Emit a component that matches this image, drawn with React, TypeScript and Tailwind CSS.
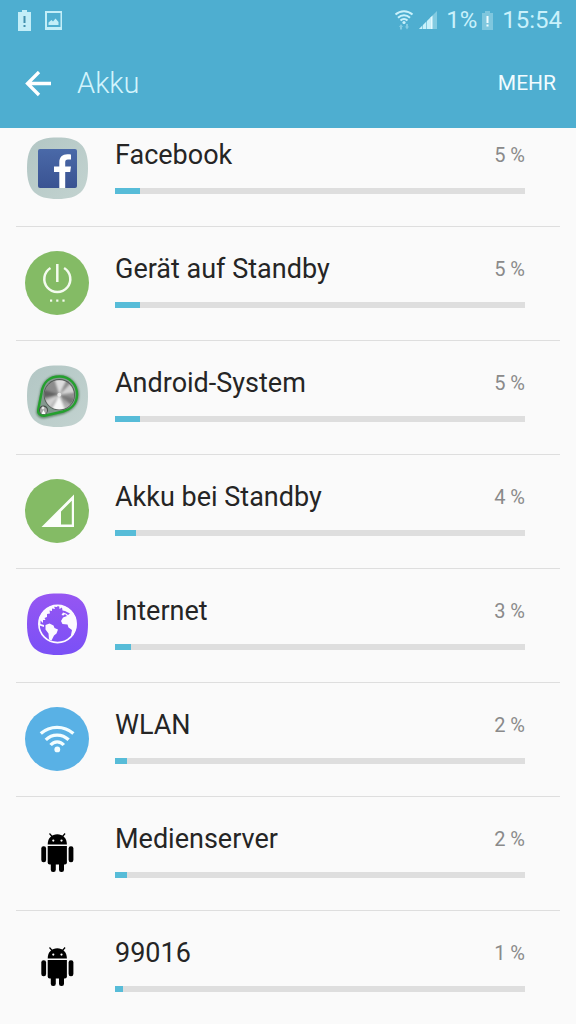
import type { ReactNode } from "react";

interface BatteryItem {
  name: string;
  percent: number;
  icon: ReactNode;
}

// Rounded square shared by the app icons
const TILE_PATH =
  "M32.500 0.500C54 0.500 63 8 63 31C63 54 54 62 32.500 62C11 62 2 54 2 31C2 8 11 0.500 32.500 0.500Z";

const FacebookIcon = () => (
  <svg viewBox="0 0 64 64" className="size-16" aria-hidden="true">
    <defs>
      <linearGradient id="fbTile" x1="0" y1="0" x2="1" y2="1">
        <stop offset="0" stopColor="#b2c6c4" />
        <stop offset="1" stopColor="#c3d3d0" />
      </linearGradient>
      <linearGradient id="fbBlue" x1="0" y1="0" x2="0" y2="1">
        <stop offset="0" stopColor="#4a69a8" />
        <stop offset="1" stopColor="#3a5392" />
      </linearGradient>
    </defs>
    <path d={TILE_PATH} fill="url(#fbTile)" />
    <rect x="13" y="12" width="39" height="39" rx="2" fill="url(#fbBlue)" />
    <path
      d="M34.300 51V35H29V29.600H34.300V25.500C34.300 20 37.500 17.200 42.300 17.200C44 17.200 45.300 17.300 46 17.400V22.500H43C40.800 22.500 40.200 23.600 40.200 25.400V29.600H46L45.200 35H40.200V51Z"
      fill="#fff"
    />
  </svg>
);

const StandbyIcon = () => (
  <svg viewBox="0 0 64 64" className="size-16" aria-hidden="true">
    <circle cx="32" cy="32" r="32" fill="#84bb65" />
    <g fill="none" stroke="#f4fbef" strokeWidth="2.500">
      <path d="M25.500 17A13 13 0 1 0 39.100 17" />
      <path d="M32.300 13V31" />
    </g>
    <g fill="#f4fbef">
      <rect x="25" y="48.500" width="2.200" height="2.200" />
      <rect x="31.200" y="48.500" width="2.200" height="2.200" />
      <rect x="37.400" y="48.500" width="2.200" height="2.200" />
    </g>
  </svg>
);

const SystemIcon = () => (
  <svg viewBox="0 0 64 64" className="size-16" aria-hidden="true">
    <defs>
      <linearGradient id="sysTile" x1="0" y1="0" x2="1" y2="1">
        <stop offset="0" stopColor="#b2c6c4" />
        <stop offset="1" stopColor="#c3d3d0" />
      </linearGradient>
      <linearGradient id="sysMetal" x1="0" y1="0" x2="0" y2="1">
        <stop offset="0" stopColor="#8d8d8d" />
        <stop offset="0.450" stopColor="#8a8a8a" />
        <stop offset="1" stopColor="#bcbcbc" />
      </linearGradient>
      <filter id="sysSoft" x="-20%" y="-20%" width="140%" height="140%">
        <feGaussianBlur stdDeviation="1.300" />
      </filter>
      <clipPath id="sysKnob">
        <circle cx="34.300" cy="29.700" r="14.500" />
      </clipPath>
    </defs>
    <path d={TILE_PATH} fill="url(#sysTile)" />
    <path
      d="M16.500 28C18 17 25 11.500 34.500 11.500C45 11.500 52.500 20 52.500 29.500C52.500 39 46 45 38 47.500L21 51.500C15.500 53 12 49.500 13 45Z"
      fill="none"
      stroke="#5f8269"
      strokeWidth="3"
      filter="url(#sysSoft)"
    />
    <path
      d="M16.500 28C18 17 25 11.500 34.500 11.500C45 11.500 52 19.500 52 29.500C52 39 45.500 44.500 38 46.500L20.500 50.500C15.500 51.500 12.500 48.500 13.300 44.500Z"
      fill="#84988f"
      stroke="#24a02e"
      strokeWidth="2.400"
    />
    <circle cx="34.300" cy="29.700" r="15.600" fill="#505852" />
    <circle cx="34.300" cy="29.700" r="14.800" fill="url(#sysMetal)" />
    <g clipPath="url(#sysKnob)">
      <g filter="url(#sysSoft)">
        <path d="M34.300 29.700L28 10L44 10Z" fill="#dedede" />
        <path d="M34.300 29.700L52 12L54 27Z" fill="#d4d4d4" />
        <path d="M34.300 29.700L42 50L24 50Z" fill="#f7f7f7" />
        <path d="M34.300 29.700L14 38L14 46L22 46Z" fill="#d0d0d0" />
        <path d="M34.300 29.700L54 34L50 43Z" fill="#777" />
        <path d="M34.300 29.700L16 24L16 33Z" fill="#606060" />
      </g>
      <circle cx="34.300" cy="29.700" r="2" fill="#fff" opacity="0.700" />
    </g>
    <circle cx="18.500" cy="45" r="4.500" fill="#465049" />
    <circle cx="18.500" cy="45.500" r="3.500" fill="#a8a8a8" />
    <path d="M18.500 45L16.500 49H20.500Z" fill="#fff" />
    <circle cx="18" cy="43" r="1.400" fill="#e8e8e8" />
  </svg>
);

const CellIcon = () => (
  <svg viewBox="0 0 64 64" className="size-16" aria-hidden="true">
    <circle cx="32" cy="32" r="32" fill="#84bb65" />
    <path
      fillRule="evenodd"
      d="M16.500 48L49 15.500V48ZM36 32.500V45.500H46.800V21.700Z"
      fill="#fbfefa"
    />
  </svg>
);

const InternetIcon = () => (
  <svg viewBox="0 0 64 64" className="size-16" aria-hidden="true">
    <defs>
      <linearGradient id="netTile" x1="0" y1="0" x2="0" y2="1">
        <stop offset="0" stopColor="#9656f2" />
        <stop offset="1" stopColor="#7a50f6" />
      </linearGradient>
      <clipPath id="netGlobe">
        <circle cx="32.500" cy="31" r="19" />
      </clipPath>
    </defs>
    <path d={TILE_PATH} fill="url(#netTile)" />
    <g clipPath="url(#netGlobe)" fill="#fcfaff">
      <path d="M12 31L14 17L25 10L33 11L32 14L29 13.500L30 16L27 15.500L27 18L24.500 17.500L25 20.500L22 21L22 24L19.500 25L20.500 27L18 27L18 30L15.500 27.500L15.500 31L19 32V34L13 32Z" />
      <path d="M34 11H44L53 24L54 36L49 46L46 42L47 37L43.500 34.500L42.500 31.500L37.500 31L36 28L38 24.500L42 23L40 21L38.500 22.500L36.500 22L38 19.500L41 20.500L43 22L45 20.500L40 18L37.500 17.500L37 14.500L34.500 16Z" />
      <path d="M20.500 32L24.500 30.500L28.500 32.500L29.500 35L33 36.500L31.500 40.500L29 42.500L26.500 47.500L24 46.500L23.500 40.500L20.500 36.500Z" />
    </g>
    <circle cx="32.500" cy="31" r="18.600" fill="none" stroke="#fcfaff" strokeWidth="1.700" />
  </svg>
);

const WlanIcon = () => (
  <svg viewBox="0 0 64 64" className="size-16" aria-hidden="true">
    <circle cx="32" cy="32" r="32" fill="#59b1e5" />
    <g fill="none" stroke="#f3fdff" strokeWidth="3.300">
      <path d="M15.800 26.500C25 18.300 39 18.300 48.400 26.500" />
      <path d="M20.800 32.800C27 26.500 37.200 26.500 43.600 32.800" />
      <path d="M25.600 38C29.200 33.700 35.200 33.700 38.800 38" />
    </g>
    <circle cx="32.300" cy="42.400" r="2.900" fill="#f3fdff" />
  </svg>
);

const AndroidIcon = () => (
  <svg viewBox="0 0 64 64" className="size-16" aria-hidden="true">
    <path d="M22.700 23.500C22.700 17 27 13.300 32.300 13.300C37.600 13.300 41.900 17 41.900 23.500Z" />
    <path d="M24.500 12.500L27.500 16M40.100 12.500L37.100 16" stroke="#000" strokeWidth="1.200" />
    <path d="M22.700 25H41.900V41.500Q41.900 43.500 39.900 43.500H24.700Q22.700 43.500 22.700 41.500Z" />
    <rect x="16.300" y="25.300" width="4.800" height="16" rx="2.200" />
    <rect x="43.600" y="25.300" width="4.800" height="16" rx="2.200" />
    <rect x="25.800" y="38" width="5" height="13" rx="2.200" />
    <rect x="34" y="38" width="5" height="13" rx="2.200" />
    <circle cx="28.300" cy="19.600" r="1.100" fill="#fff" />
    <circle cx="36.500" cy="19.600" r="1.100" fill="#fff" />
  </svg>
);

const items: BatteryItem[] = [
  { name: "Facebook", percent: 5, icon: <FacebookIcon /> },
  { name: "Gerät auf Standby", percent: 5, icon: <StandbyIcon /> },
  { name: "Android-System", percent: 5, icon: <SystemIcon /> },
  { name: "Akku bei Standby", percent: 4, icon: <CellIcon /> },
  { name: "Internet", percent: 3, icon: <InternetIcon /> },
  { name: "WLAN", percent: 2, icon: <WlanIcon /> },
  { name: "Medienserver", percent: 2, icon: <AndroidIcon /> },
  { name: "99016", percent: 1, icon: <AndroidIcon /> },
];

const StatusBar = () => (
  <div className="flex h-10 items-center justify-between pl-4 pr-3.5 text-[#c9f1fb]">
    <div className="flex items-center gap-3">
      <svg viewBox="0 0 16 22" className="h-[22px] w-4" aria-hidden="true">
        <path d="M2 3H6V1H11V3H15V22H2Z" fill="#c3eef8" />
        <path d="M7.500 7H9.500V14H7.500ZM7.500 16H9.500V18H7.500Z" fill="#4390ad" />
      </svg>
      <svg viewBox="0 0 19 20" className="h-5 w-[19px]" aria-hidden="true">
        <path
          fillRule="evenodd"
          d="M1 1H18V20H1ZM3 3V17H16.500V3Z"
          fill="#c3eef8"
        />
        <path d="M4.500 15V12.500L7.500 10L9 11.500L11.500 8.500L14.500 12V15Z" fill="#c3eef8" />
      </svg>
    </div>
    <div className="flex items-center gap-2">
      <div className="flex items-center gap-1">
        <svg viewBox="0 0 20 22" className="h-[22px] w-5" aria-hidden="true">
          <g fill="none" stroke="#c9f1fb" strokeWidth="2">
            <path d="M1.500 5.500C6.500 1 13.500 1 18.500 5.500" />
            <path d="M4 8.700C7.500 5.500 12.500 5.500 16 8.700" />
            <path d="M6.500 11.500C8.500 9.600 11.500 9.600 13.500 11.500" />
          </g>
          <circle cx="10" cy="13.500" r="1.600" fill="#c9f1fb" />
          <path
            d="M5 18L7 15L9 18H8V20.500H6V18ZM11 17.500H12V15H14V17.500H15L13 20.500Z"
            fill="#85cce2"
          />
        </svg>
        <svg viewBox="0 0 20 20" className="size-5" aria-hidden="true">
          <path d="M1 19L19 1V19Z" fill="#83cbe1" />
          <path d="M1 19L4 16V19ZM5 19V15L8 12V19ZM9 19V11L12.500 7.500V19Z" fill="#c9f1fb" />
          <path d="M12.500 19V7.500L14.500 5.500V19Z" fill="#e5faff" />
        </svg>
      </div>
      <div className="flex items-center gap-1">
        <span className="text-2xl">1%</span>
        <svg viewBox="0 0 13 20" className="h-5 w-[13px]" aria-hidden="true">
          <path d="M1 3H4V1H9V3H12V20H1Z" fill="#7fc7de" />
          <path d="M5.500 6H7.500V13H5.500ZM5.500 14.500H7.500V16.500H5.500Z" fill="#f2fdff" />
        </svg>
      </div>
      <span className="text-2xl">15:54</span>
    </div>
  </div>
);

const BatteryRow = ({ name, percent, icon }: BatteryItem) => (
  <li className="mx-4 flex h-[114px] gap-[26px] border-b border-[#dedede] pt-6 pl-[9px] pr-[35px] last:border-b-0">
    <div className="shrink-0">{icon}</div>
    <div className="flex-1">
      <div className="flex h-9 items-center justify-between">
        <span className="text-[27px] leading-9 text-[#252525]">{name}</span>
        <span className="text-xl leading-9 text-[#8a8a8a]">{percent} %</span>
      </div>
      <div
        role="progressbar"
        aria-label={name}
        aria-valuenow={percent}
        aria-valuemin={0}
        aria-valuemax={100}
        className="mt-[15px] h-1.5 bg-[#dedede]"
      >
        <div className="h-full bg-[#57bcd8]" style={{ width: `${percent + 1}%` }} />
      </div>
    </div>
  </li>
);

export default function App() {
  return (
    <div className="min-h-screen bg-[#fafafa] font-['Roboto',sans-serif]">
      <header className="relative z-10 bg-[#4eaed0]">
        <StatusBar />
        <div className="flex h-[88px] items-center pl-[25px] pr-5">
          <button type="button" aria-label="Zurück" className="mr-[25px]">
            <svg viewBox="0 0 27 26" className="h-[26px] w-[27px]" aria-hidden="true">
              <path
                d="M14 1L2.500 12.500L14 24M2.500 12.500H26"
                fill="none"
                stroke="#fff"
                strokeWidth="3.300"
              />
            </svg>
          </button>
          <h1 className="flex-1 text-[29px] font-light text-[#d3f4fc]">Akku</h1>
          <button type="button" className="text-[21px] text-[#f2fcff]">
            MEHR
          </button>
        </div>
      </header>
      {/* List is scrolled slightly under the header */}
      <ul className="-mt-[15px]">
        {items.map((item) => (
          <BatteryRow key={item.name} {...item} />
        ))}
      </ul>
    </div>
  );
}
